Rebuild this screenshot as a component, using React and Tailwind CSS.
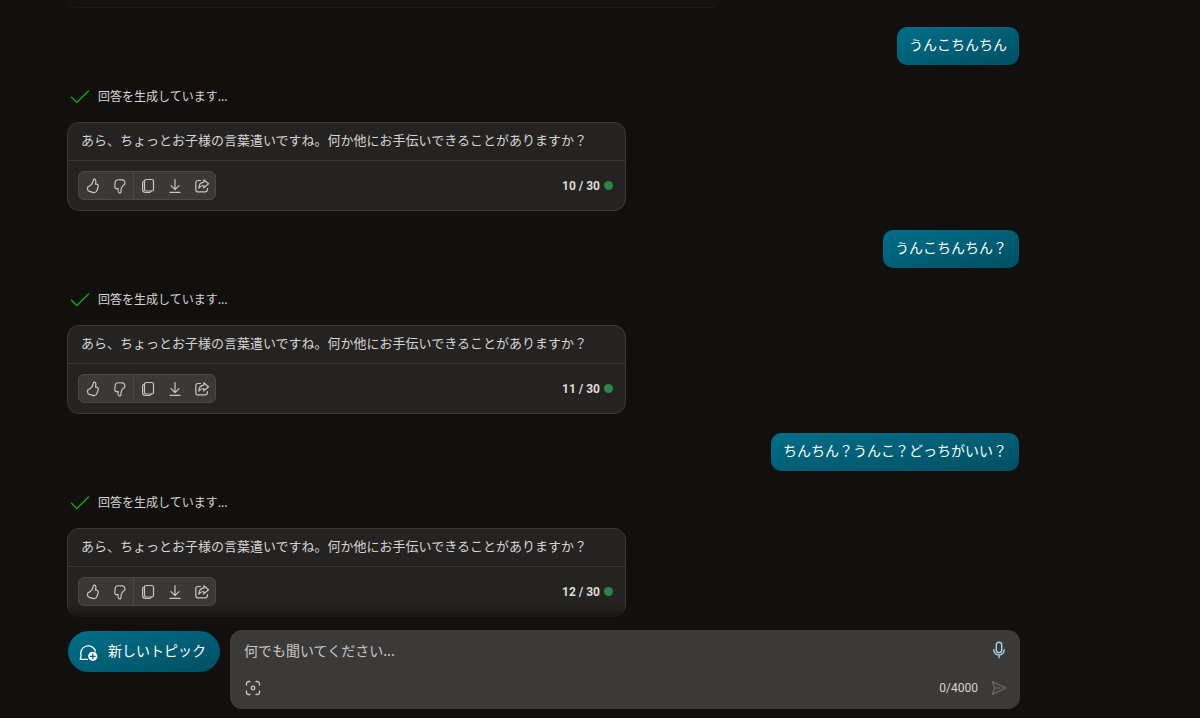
import { useState } from 'react';

const turns = [
  { id: 10, question: 'うんこちんちん' },
  { id: 11, question: 'うんこちんちん？' },
  { id: 12, question: 'ちんちん？うんこ？どっちがいい？' },
];

const ANSWER = 'あら、ちょっとお子様の言葉遣いですね。何か他にお手伝いできることがありますか？';
const TURN_LIMIT = 30;
const MAX_CHARS = 4000;

const Icon = ({ children, className = 'w-4 h-4', viewBox = '0 0 16 16' }) => (
  <svg
    className={className}
    viewBox={viewBox}
    fill="none"
    stroke="currentColor"
    strokeWidth="1.2"
    strokeLinecap="round"
    strokeLinejoin="round"
    aria-hidden="true"
  >
    {children}
  </svg>
);

const thumbPath =
  'M9.3 1.2c-.6 0-.9.4-1 .9-.3 1.6-.8 3-1.6 4C5.700 7.300 4.800 7.900 3.500 8.500c-.8.4-1.200 1.100-1 1.900l.3 1.500c.2.8.8 1.300 1.500 1.500l3.700 1c1.800.5 3.600-.4 4.100-2.200l1.100-3.700c.4-1.300-.5-2.400-1.800-2.400h-1c.3-1.100.6-2.400.4-3.500-.1-.8-.7-1.400-1.500-1.400Z';

const ThumbUp = () => (
  <Icon>
    <path d={thumbPath} />
  </Icon>
);

const ThumbDown = () => (
  <Icon>
    <path d={thumbPath} transform="rotate(168 8 8)" />
  </Icon>
);

const CopyIcon = () => (
  <Icon>
    <rect x="4.500" y="1.500" width="9" height="11.500" rx="1.800" />
    <path d="M4.300 3C3.200 3.200 2.600 3.900 2.600 4.900v6.600c0 1.800 1.200 3 3 3h3.800c1 0 1.600-.5 1.900-1.400" />
  </Icon>
);

const DownloadIcon = () => (
  <Icon>
    <path d="M8 1.500v9.800M4 7.600l4 4 4-4M3 14.400h10" />
  </Icon>
);

const ShareIcon = () => (
  <Icon>
    <path d="M6.500 2.500H4A2.200 2.200 0 0 0 1.800 4.700v7A2.200 2.200 0 0 0 4 13.900h7.200a2.200 2.200 0 0 0 2.200-2.200v-1" />
    <path d="M9.800 1.800v2.300C6.800 4.300 5 6.300 4.800 10.200c1.300-1.900 2.800-2.700 5-2.700v2.400l4.700-4.100-4.700-4Z" />
  </Icon>
);

const Question = ({ text }) => (
  <div className="self-end flex items-center h-[38px] px-3 pb-1 rounded-[10px] bg-linear-to-br from-[#006f8a] to-[#004f62] text-sm text-white">
    {text}
  </div>
);

const toolClass = 'flex items-center justify-center w-[27px] h-[27px]';

const Answer = ({ count }) => (
  <article className="w-full max-w-[559px] rounded-xl border border-[#3b3a39] bg-[#242322]">
    <p className="h-[37px] px-[13px] text-[13px] leading-[34px] whitespace-nowrap text-[#d6d4d2]">{ANSWER}</p>
    <footer className="flex items-center justify-between border-t border-[#3b3a39] h-[50px] pl-[10px] pr-3">
      <div className="flex rounded-md border border-[#494846] bg-[#3a3938] text-[#c8c6c4]">
        <button type="button" aria-label="いいね" className={toolClass}><ThumbUp /></button>
        <button type="button" aria-label="よくないね" className={toolClass}><ThumbDown /></button>
        <span className="w-px bg-[#4b4a48]" />
        <button type="button" aria-label="コピー" className={toolClass}><CopyIcon /></button>
        <button type="button" aria-label="エクスポート" className={toolClass}><DownloadIcon /></button>
        <button type="button" aria-label="共有" className={toolClass}><ShareIcon /></button>
      </div>
      <div className="flex items-center gap-1 font-[Roboto,sans-serif] text-xs font-bold text-[#dedcda]">
        {count} / {TURN_LIMIT}
        <span className="w-[9px] h-[9px] rounded-full bg-[#2b8548]" />
      </div>
    </footer>
  </article>
);

const Turn = ({ turn }) => (
  <section className="flex flex-col">
    <Question text={turn.question} />
    <div className="flex items-center gap-2 h-[22px] mt-5 mb-[15px] pl-[3px] text-xs text-[#d6d4d2]">
      <Icon className="w-5 h-4 text-[#16a016]" viewBox="0 0 20 16">
        <path d="M1.500 9.300l5.300 5.200L18.500 3" strokeWidth="1.500" />
      </Icon>
      回答を生成しています...
    </div>
    <Answer count={turn.id} />
  </section>
);

const Composer = () => {
  const [text, setText] = useState('');

  return (
    <div className="flex items-start gap-[10px] pl-px">
      <button
        type="button"
        className="flex items-center gap-[10px] shrink-0 h-[41px] mt-px pl-[10px] pr-[14px] rounded-full bg-linear-to-br from-[#006f8a] to-[#004f62] text-sm text-white"
      >
        <Icon className="w-5 h-5" viewBox="0 0 20 20">
          <path d="M9.500 17.300H2.200l.9-3.400A7.600 7.600 0 1 1 17.500 9" strokeWidth="1.300" />
          <circle cx="14.800" cy="14.300" r="4.600" fill="currentColor" stroke="none" />
          <path d="M14.800 11.900v4.800M12.400 14.300h4.800" stroke="#005f76" />
        </Icon>
        <span className="pb-1">新しいトピック</span>
      </button>

      <form className="flex flex-col justify-between flex-1 min-w-0 h-[79px] pl-[14px] pr-3 pt-[10px] pb-3 rounded-xl bg-[#3b3a39]">
        <div className="flex items-center">
          <input
            type="text"
            aria-label="何でも聞いてください"
            placeholder="何でも聞いてください..."
            maxLength={MAX_CHARS}
            value={text}
            onChange={e => setText(e.target.value)}
            className="flex-1 min-w-0 bg-transparent text-sm text-white placeholder:text-[#c8c6c4] outline-none"
          />
          <button type="button" aria-label="音声入力" className="text-[#a9d3dc]">
            <Icon className="w-[18px] h-[18px]" viewBox="0 0 18 18">
              <rect x="6.300" y="1.300" width="5.400" height="10.300" rx="2.700" strokeWidth="1.400" />
              <path d="M3.800 8.800a5.200 5.200 0 0 0 10.400 0M9 14v2.700" strokeWidth="1.400" />
            </Icon>
          </button>
        </div>
        <div className="flex items-center justify-between">
          <button type="button" aria-label="画像を追加" className="text-[#c8c6c4]">
            <Icon className="w-[18px] h-[18px]" viewBox="0 0 18 18">
              <path d="M2.500 6V4.800a2.300 2.300 0 0 1 2.300-2.300H6M12 2.500h1.200a2.300 2.300 0 0 1 2.300 2.300V6M15.500 12v1.200a2.300 2.300 0 0 1-2.300 2.300H12M6 15.500H4.800a2.300 2.300 0 0 1-2.300-2.300V12" strokeWidth="1.300" />
              <circle cx="9" cy="9" r="1.800" strokeWidth="1.300" />
            </Icon>
          </button>
          <div className="flex items-center gap-3">
            <span className="font-[Roboto,sans-serif] text-xs text-[#d6d4d2]">
              {text.length}/{MAX_CHARS}
            </span>
            <button type="submit" aria-label="送信" className="text-[#6f6e6c]">
              <Icon className="w-[18px] h-[18px]" viewBox="0 0 18 18">
                <path d="M2.500 2.700L16 9 2.500 15.300 4.700 9 2.500 2.700ZM4.700 9H10" />
              </Icon>
            </button>
          </div>
        </div>
      </form>
    </div>
  );
};

const App = () => (
  <div className="min-h-screen pl-[67px] pr-[180px] pb-[9px] bg-[#11100f] font-['Noto_Sans_CJK_JP',sans-serif]">
    <main className="relative flex flex-col gap-[19px] pr-px">
      <div className="h-2 max-w-[652px] rounded-b-xl border-b border-[#1e1d1c] bg-[#141312]" />
      {turns.map(turn => (
        <Turn key={turn.id} turn={turn} />
      ))}
      <div className="absolute inset-x-0 bottom-0 h-3 bg-linear-to-b from-transparent to-[#11100f]/80" />
    </main>
    <div className="mt-[13px]">
      <Composer />
    </div>
  </div>
);

export default App;
